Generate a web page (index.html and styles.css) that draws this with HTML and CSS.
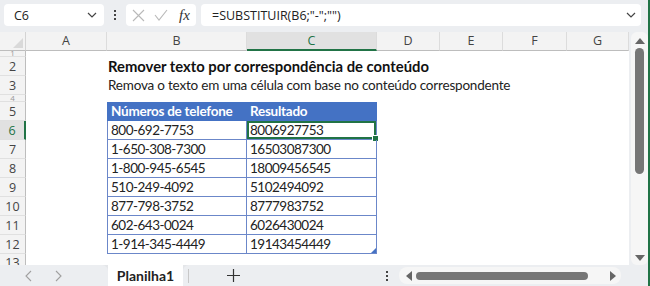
FILE: index.html
```html
<!DOCTYPE html>
<html lang="pt">
<head>
  <meta charset="UTF-8">
  <title>Planilha1</title>
  <link rel="stylesheet" href="styles.css">
</head>
<body>
  <div class="app">
    <div class="toolbar">
      <div class="namebox">
        <span>C6</span>
        <svg class="chev" width="10" height="6" viewBox="0 0 10 6"><polyline points="1,1 5,5 9,1" fill="none" stroke="#444" stroke-width="1.2"/></svg>
      </div>
      <div class="vdots"><i></i><i></i><i></i></div>
      <div class="fxbox">
        <svg width="13" height="13" viewBox="0 0 13 13"><path d="M1 1 L12 12 M12 1 L1 12" stroke="#b9b9b9" stroke-width="1.1"/></svg>
        <svg width="14" height="12" viewBox="0 0 14 12"><polyline points="1,6 5,11 13,1" fill="none" stroke="#b9b9b9" stroke-width="1.1"/></svg>
        <span class="fx">fx</span>
      </div>
      <div class="formula">
        <span>=SUBSTITUIR(B6;"-";"")</span>
        <svg class="chev" width="10" height="6" viewBox="0 0 10 6"><polyline points="1,1 5,5 9,1" fill="none" stroke="#444" stroke-width="1.2"/></svg>
      </div>
    </div>

    <div class="main">
      <div class="sheet">
        <div class="row head">
          <div class="corner"></div>
          <div class="col">A</div>
          <div class="col">B</div>
          <div class="col sel">C</div>
          <div class="col">D</div>
          <div class="col">E</div>
          <div class="col">F</div>
          <div class="col">G</div>
        </div>
        <div class="row r1"><div class="num">1</div></div>
        <div class="row r2"><div class="num">2</div><div></div><div class="title">Remover texto por correspondência de conteúdo</div></div>
        <div class="row r3"><div class="num">3</div><div></div><div class="sub">Remova o texto em uma célula com base no conteúdo correspondente</div></div>
        <div class="row r4"><div class="num">4</div></div>
        <div class="row t"><div class="num">5</div><div></div><div class="cell th b">Números de telefone</div><div class="cell th">Resultado</div></div>
        <div class="row t"><div class="num selrow">6</div><div></div><div class="cell b">800-692-7753</div><div class="cell active">8006927753</div></div>
        <div class="row t"><div class="num">7</div><div></div><div class="cell b">1-650-308-7300</div><div class="cell">16503087300</div></div>
        <div class="row t"><div class="num">8</div><div></div><div class="cell b">1-800-945-6545</div><div class="cell">18009456545</div></div>
        <div class="row t"><div class="num">9</div><div></div><div class="cell b">510-249-4092</div><div class="cell">5102494092</div></div>
        <div class="row t"><div class="num">10</div><div></div><div class="cell b">877-798-3752</div><div class="cell">8777983752</div></div>
        <div class="row t"><div class="num">11</div><div></div><div class="cell b">602-643-0024</div><div class="cell">6026430024</div></div>
        <div class="row t"><div class="num">12</div><div></div><div class="cell b">1-914-345-4449</div><div class="cell last">19143454449</div></div>
        <div class="row r13"><div class="num">13</div></div>
      </div>
      <div class="vscroll">
        <div class="up"></div>
        <div class="vthumb"></div>
        <div class="down"></div>
      </div>
    </div>

    <div class="tabbar">
      <div class="nav">
        <svg width="7" height="12" viewBox="0 0 7 12"><polyline points="6,1 1,6 6,11" fill="none" stroke="#a0a0a0" stroke-width="1.1"/></svg>
        <svg width="7" height="12" viewBox="0 0 7 12"><polyline points="1,1 6,6 1,11" fill="none" stroke="#a0a0a0" stroke-width="1.1"/></svg>
      </div>
      <div class="tab">Planilha1</div>
      <div class="tabrest">
        <span class="sep"></span>
        <svg class="plus" width="13" height="13" viewBox="0 0 13 13"><path d="M6.5 0 V13 M0 6.5 H13" stroke="#333" stroke-width="1.2"/></svg>
        <div class="vdots small"><i></i><i></i><i></i></div>
        <div class="hscroll">
          <div class="left"></div>
          <div class="hthumb"></div>
          <div class="right"></div>
        </div>
      </div>
    </div>
  </div>
</body>
</html>
```

FILE: styles.css
```css
* {
  margin: 0;
  padding: 0;
  box-sizing: border-box;
}

body {
  background: #fff;
}

.app {
  width: 650px;
  height: 286px;
  background: #eceef1;
  border-right: 2px solid #217346;
  display: flex;
  flex-flow: column nowrap;
  overflow: hidden;
  font-family: "Open Sans", "Noto Sans", sans-serif;
  color: #222;
}

/* barra de fórmulas */
.toolbar {
  height: 32px;
  display: flex;
  align-items: flex-start;
  padding: 4px 0 0 4px;
}
.namebox {
  width: 100px;
  height: 22px;
  background: #fff;
  border-radius: 4px;
  display: flex;
  align-items: center;
  justify-content: space-between;
  padding: 0 7px 0 10px;
  font-size: 12.5px;
}
.vdots {
  width: 22px;
  height: 22px;
  display: flex;
  flex-flow: column nowrap;
  align-items: center;
  justify-content: center;
  gap: 2px;
}
.vdots i {
  display: block;
  width: 2px;
  height: 2px;
  background: #444;
}
.fxbox {
  width: 70px;
  height: 22px;
  background: #fff;
  border-radius: 4px;
  display: flex;
  align-items: center;
  padding-left: 6px;
  gap: 9px;
}
.fx {
  font-family: "Liberation Serif", serif;
  font-style: italic;
  font-size: 15px;
  color: #333;
  margin-left: 2px;
}
.formula {
  margin-left: 5px;
  width: 440px;
  height: 22px;
  background: #fff;
  border-radius: 4px;
  display: flex;
  align-items: center;
  justify-content: space-between;
  padding: 0 5px 0 11px;
  font-size: 12.5px;
}

/* planilha */
.main {
  height: 233px;
  display: flex;
}
.sheet {
  width: 629px;
  background: #fff;
  display: flex;
  flex-flow: column nowrap;
}
.row {
  display: grid;
  grid-template-columns: 26px 81px 140px 130px 63px 63px 64px 62px;
  height: 19px;
}
.row.head { height: 18px; }
.row.r1 { height: 9px; }
.row.r4 { height: 7px; }
.row.r13 { height: 11px; }

.corner {
  background: #f3f3f3;
  border-right: 1px solid #d4d4d4;
  border-bottom: 1px solid #bdbdbd;
  position: relative;
}
.corner::after {
  content: "";
  position: absolute;
  right: 2px;
  bottom: 2px;
  border-left: 10px solid transparent;
  border-bottom: 10px solid #d9d9d9;
}
.col {
  background: #f3f3f3;
  border-right: 1px solid #dcdcdc;
  border-bottom: 1px solid #bdbdbd;
  font-size: 12.5px;
  color: #444;
  text-align: center;
  line-height: 17px;
}
.col.sel {
  background: #e1e1e1;
  border-bottom: 2px solid #217346;
  color: #217346;
}
.num {
  background: #f3f3f3;
  border-right: 1px solid #bdbdbd;
  border-bottom: 1px solid #e0e0e0;
  font-size: 12.5px;
  color: #444;
  text-align: center;
  line-height: 19px;
  overflow: hidden;
}
.r1 .num, .r4 .num { line-height: 6px; color: #999; font-size: 8px; }
.r13 .num { border-bottom: 0; line-height: 17px; }
.num.selrow {
  background: #e1e1e1;
  border-right: 2px solid #217346;
  color: #217346;
}

.title, .sub {
  font-family: "Lato", sans-serif;
  line-height: 19px;
  padding-left: 1px;
  white-space: nowrap;
}
.title {
  font-size: 14.8px;
  font-weight: bold;
  color: #111;
}
.sub {
  font-size: 13.5px;
  letter-spacing: -0.2px;
  color: #222;
}

.cell {
  font-family: "Lato", sans-serif;
  font-size: 13.5px;
  letter-spacing: -0.5px;
  line-height: 18px;
  padding-left: 3px;
  white-space: nowrap;
  border-right: 1px solid #6b87c9;
  border-bottom: 1px solid #6b87c9;
  position: relative;
}
.cell.b { border-left: 1px solid #6b87c9; }
.cell.th {
  background: #4472c4;
  color: #fff;
  letter-spacing: -0.25px;
  font-weight: bold;
  border-color: #4472c4;
}
.cell.active {
  box-shadow: inset 0 0 0 2px #217346;
}
.cell.active::after {
  content: "";
  position: absolute;
  right: -3px;
  bottom: -3px;
  width: 5px;
  height: 5px;
  background: #217346;
  border: 1px solid #fff;
}
.cell.last::after {
  content: "";
  position: absolute;
  right: 0;
  bottom: 0;
  border-left: 5px solid transparent;
  border-bottom: 5px solid #4472c4;
}

/* barra de rolagem vertical */
.vscroll {
  width: 17px;
  margin-left: 2px;
  background: #f6f6f6;
  border-radius: 6px;
  display: flex;
  flex-flow: column nowrap;
  align-items: center;
  padding: 6px 0 4px;
}
.up {
  border-left: 5px solid transparent;
  border-right: 5px solid transparent;
  border-bottom: 6px solid #666;
}
.vthumb {
  margin-top: 4px;
  width: 9px;
  height: 126px;
  background: #767676;
  border-radius: 5px;
}
.down {
  margin-top: auto;
  border-left: 5px solid transparent;
  border-right: 5px solid transparent;
  border-top: 6px solid #666;
}

/* abas */
.tabbar {
  height: 21px;
  display: flex;
  background: #e4e6e9;
}
.nav {
  width: 108px;
  background: #eceef1;
  border-top-right-radius: 6px;
  display: flex;
  align-items: center;
  padding-left: 25px;
  gap: 23px;
}
.tab {
  width: 75px;
  background: #fff;
  font-family: "Lato", sans-serif;
  font-weight: bold;
  font-size: 14px;
  line-height: 21px;
  text-align: center;
}
.tabrest {
  flex: 1;
  background: #eceef1;
  border-top-left-radius: 6px;
  display: flex;
  align-items: center;
}
.sep {
  width: 1px;
  height: 14px;
  background: #c8c8c8;
  margin-left: 5px;
}
.plus {
  margin-left: 38px;
}
.vdots.small {
  margin-left: 144px;
  width: 6px;
  gap: 2px;
}
.hscroll {
  margin-left: 9px;
  width: 222px;
  height: 17px;
  background: #f6f6f6;
  border-radius: 8px;
  display: flex;
  align-items: center;
  padding: 0 5px 0 7px;
}
.hscroll .left {
  border-top: 5px solid transparent;
  border-bottom: 5px solid transparent;
  border-right: 6px solid #666;
}
.hthumb {
  margin-left: 4px;
  width: 172px;
  height: 8px;
  background: #767676;
  border-radius: 4px;
}
.hscroll .right {
  margin-left: auto;
  border-top: 5px solid transparent;
  border-bottom: 5px solid transparent;
  border-left: 6px solid #666;
}
```
